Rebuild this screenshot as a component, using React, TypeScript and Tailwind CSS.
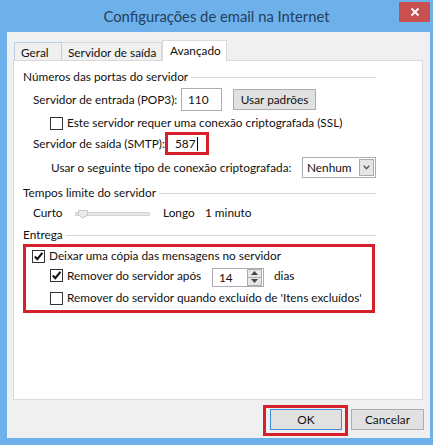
import React from 'react';

const Check: React.FC<{ checked?: boolean }> = ({ checked }) => (
    <span className="flex h-[13px] w-[13px] shrink-0 items-center justify-center border border-[#333333] bg-white">
        {checked && (
            <svg width="11" height="11" viewBox="0 0 11 11">
                <path d="M1.8 5.6 L4.3 8.2 L9.4 1.8" fill="none" stroke="#111" strokeWidth="2.1" />
            </svg>
        )}
    </span>
);

const GroupLabel: React.FC<{ children: React.ReactNode; className?: string }> = ({ children, className }) => (
    <div className={`flex h-[16px] w-[353px] items-center ${className ?? ''}`}>
        <span>{children}</span>
        <div className="ml-[3px] h-px flex-1 bg-[#d5d5d5]"></div>
    </div>
);

const App: React.FC = () => {
    return (
        <div className="h-[447px] w-[440px] overflow-hidden whitespace-nowrap bg-white font-['Lato',sans-serif] text-[11.8px] leading-none text-[#111]">
            <div className="flex h-[445px] w-[433px] flex-col bg-[#6eb1ea] pb-[7px] pl-[7px] pr-[3px]">
                {/* title bar */}
                <div className="-ml-[7px] grid h-[32px] grid-cols-[38px_1fr_38px]">
                    <div></div>
                    <div className="flex items-center justify-center pl-[3px] pt-px text-[14.8px] text-[#22405e]">
                        Configurações de email na Internet
                    </div>
                    <div className="flex justify-end pt-[2px]">
                        <div className="flex h-[20px] w-[31px] items-center justify-center bg-[#c9504f]">
                            <svg width="10" height="10" viewBox="0 0 10 10">
                                <path d="M1.5 1.5 L8.5 8.5 M8.5 1.5 L1.5 8.5" stroke="#fff" strokeWidth="1.8" />
                            </svg>
                        </div>
                    </div>
                </div>

                {/* window body */}
                <div className="flex flex-1 flex-col bg-[#f0f0f0] pt-[8px]">
                    {/* tabs */}
                    <div className="flex h-[21px] items-end pl-[7px]">
                        <div className="flex h-[19px] w-[48px] items-center border border-b-0 border-[#b9d1e8] bg-[#f0f0f0] pl-[6px] pt-px">
                            Geral
                        </div>
                        <div className="flex h-[19px] w-[100px] items-center border border-b-0 border-l-0 border-[#d9d9d9] bg-[#f0f0f0] pl-[6px] pt-px">
                            Servidor de saída
                        </div>
                        <div className="relative z-10 flex h-[21px] w-[65px] items-start border border-b-0 border-[#d9d9d9] bg-white pl-[7px] pt-[4px]">
                            Avançado
                        </div>
                    </div>

                    {/* tab panel */}
                    <div className="-mt-px ml-[6px] flex h-[340px] w-[410px] flex-col border border-[#d9d9d9] bg-white pl-[9px]">
                        <GroupLabel className="mt-[8px]">Números das portas do servidor</GroupLabel>

                        <div className="mt-[3px] flex h-[23px] items-center pl-[10px]">
                            <span className="w-[148px] shrink-0">Servidor de entrada (POP3):</span>
                            <div className="flex h-[23px] w-[41px] shrink-0 items-center border border-[#abadb3] bg-white pl-[6px]">110</div>
                            <div className="ml-[11px] flex h-[21px] w-[83px] shrink-0 items-center justify-center border border-[#adadad] bg-[#e1e1e1]">
                                Usar padrões
                            </div>
                        </div>

                        <div className="mt-[3px] flex h-[18px] items-center gap-[4px] pl-[27px]">
                            <Check />
                            <span>Este servidor requer uma conexão criptografada (SSL)</span>
                        </div>

                        <div className="flex h-[23px] items-center pl-[10px]">
                            <span className="w-[132px] shrink-0">Servidor de saída (SMTP):</span>
                            <div className="flex h-[23px] w-[44px] shrink-0 items-center border-[3px] border-[#d7202c] bg-white pl-[7px]">
                                587
                                <span className="ml-px h-[14px] w-px bg-black"></span>
                            </div>
                        </div>

                        <div className="mt-[2px] flex h-[21px] items-center pl-[28px]">
                            <span className="w-[251px] shrink-0">Usar o seguinte tipo de conexão criptografada:</span>
                            <div className="flex h-[21px] w-[74px] shrink-0 items-center border border-[#abadb3] bg-white pl-[4px]">
                                <span className="flex-1">Nenhum</span>
                                <div className="mr-px flex h-[17px] w-[15px] items-center justify-center border border-[#acacac] bg-[#e6e6e6]">
                                    <svg width="7" height="5" viewBox="0 0 7 5">
                                        <path d="M0.8 0.8 L3.5 3.8 L6.2 0.8" fill="none" stroke="#555" strokeWidth="1.3" />
                                    </svg>
                                </div>
                            </div>
                        </div>

                        <GroupLabel className="mt-[7px]">Tempos limite do servidor</GroupLabel>

                        <div className="mt-[4px] flex h-[16px] items-center pl-[10px]">
                            <span className="w-[40px] shrink-0">Curto</span>
                            <svg width="78" height="12" viewBox="0 0 78 12" className="shrink-0">
                                <rect x="2.5" y="5.5" width="74" height="3" fill="#e7e7e7" stroke="#d4d4d4" />
                                <path d="M5.5 3.5 H14.5 V8 L10 11 L5.5 8 Z" fill="#ececec" stroke="#c6c6c6" />
                            </svg>
                            <span className="ml-[12px] w-[42px] shrink-0">Longo</span>
                            <span>1 minuto</span>
                        </div>

                        <GroupLabel className="mt-[6px]">Entrega</GroupLabel>

                        <div className="mt-px flex h-[69px] w-[352px] flex-col border-[3px] border-[#d7202c]">
                            <div className="mt-px flex h-[16px] items-center gap-[4px] pl-[6px]">
                                <Check checked />
                                <span>Deixar uma cópia das mensagens no servidor</span>
                            </div>
                            <div className="mt-[2px] flex h-[19px] items-center pl-[24px]">
                                <Check checked />
                                <span className="ml-[4px] w-[145px] shrink-0">Remover do servidor após</span>
                                <div className="mt-[3px] flex h-[19px] w-[52px] shrink-0 items-center border border-[#abadb3] bg-white pl-[6px]">
                                    <span className="flex-1 pt-px">14</span>
                                    <div className="mr-px flex h-[17px] w-[15px] flex-col">
                                        <div className="flex flex-1 items-center justify-center border border-[#acacac] bg-[#e6e6e6]">
                                            <svg width="7" height="4" viewBox="0 0 7 4">
                                                <path d="M0 4 L3.5 0 L7 4 Z" fill="#444" />
                                            </svg>
                                        </div>
                                        <div className="flex flex-1 items-center justify-center border border-t-0 border-[#acacac] bg-[#e6e6e6]">
                                            <svg width="7" height="4" viewBox="0 0 7 4">
                                                <path d="M0 0 L3.5 4 L7 0 Z" fill="#444" />
                                            </svg>
                                        </div>
                                    </div>
                                </div>
                                <span className="ml-[10px]">dias</span>
                            </div>
                            <div className="mt-[5px] flex h-[16px] items-center gap-[4px] pl-[24px]">
                                <Check />
                                <span>Remover do servidor quando excluído de 'Itens excluídos'</span>
                            </div>
                        </div>
                    </div>

                    {/* dialog buttons */}
                    <div className="mt-[5px] flex items-start justify-end pr-[6px]">
                        <div className="border-[3px] border-[#d7202c] pb-[3px] pl-[4px] pr-[3px] pt-px">
                            <div className="flex h-[21px] w-[72px] items-center justify-center border border-[#3c8fd8] bg-[#e1e1e1]">
                                OK
                            </div>
                        </div>
                        <div className="ml-[3px] mt-[4px] flex h-[21px] w-[73px] items-center justify-center border border-[#adadad] bg-[#e1e1e1]">
                            Cancelar
                        </div>
                    </div>
                </div>
            </div>
        </div>
    );
};

export default App;
